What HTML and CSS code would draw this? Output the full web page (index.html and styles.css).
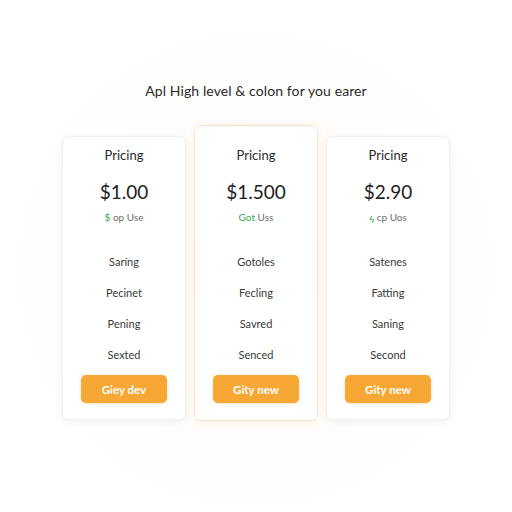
FILE: index.html
```html
<!DOCTYPE html>
<html>
<head>
<meta charset="utf-8">
<link rel="stylesheet" href="styles.css">
</head>
<body>
<div class="page">
  <h1 class="title">Apl High level &amp; colon for you earer</h1>
  <div class="cards">
    <div class="card">
      <div class="name">Pricing</div>
      <div class="price">$1.00</div>
      <div class="sub"><span class="green">$</span> op Use</div>
      <ul class="features">
        <li>Saríng</li>
        <li>Pecinet</li>
        <li>Pening</li>
        <li>Sexted</li>
      </ul>
      <button class="btn">Giey dev</button>
    </div>
    <div class="card featured">
      <div class="name">Pricing</div>
      <div class="price">$1.500</div>
      <div class="sub"><span class="green">Got</span> Uss</div>
      <ul class="features">
        <li>Gotoles</li>
        <li>Fecling</li>
        <li>Savred</li>
        <li>Senced</li>
      </ul>
      <button class="btn">Gity new</button>
    </div>
    <div class="card">
      <div class="name">Pricing</div>
      <div class="price">$2.90</div>
      <div class="sub"><span class="green">ϟ</span> cp Uos</div>
      <ul class="features">
        <li>Satenes</li>
        <li>Fatting</li>
        <li>Saning</li>
        <li>Second</li>
      </ul>
      <button class="btn">Gity new</button>
    </div>
  </div>
</div>
</body>
</html>
```

FILE: styles.css
```css
* { box-sizing: border-box; }
html, body {
  margin: 0;
  padding: 0;
  width: 512px;
  height: 512px;
  background: radial-gradient(circle at 256px 270px, #fffaf6 0, #ffffff 260px);
  font-family: Lato, "Open Sans", sans-serif;
  color: #2b2b2b;
}
.page {
  display: flex;
  flex-direction: column;
  align-items: center;
  padding-top: 82px;
}
.title {
  margin: 0;
  font-size: 14px;
  font-weight: 400;
  line-height: 18px;
  color: #2a2a2a;
  letter-spacing: 0.1px;
}
.cards {
  display: flex;
  align-items: flex-start;
  gap: 8px;
  margin-top: 25px;
}
.card {
  width: 124px;
  background: #fff;
  border: 1px solid #f1f1f1;
  border-radius: 7px;
  box-shadow: 0 2px 8px rgba(0,0,0,0.06);
  display: flex;
  flex-direction: column;
  align-items: center;
  padding: 10px 0 16px;
  margin-top: 11px;
  text-align: center;
}
.card.featured {
  border: 1.5px solid #fbe1cc;
  box-shadow: 0 2px 10px rgba(245,160,90,0.14);
  padding-top: 21px;
  padding-bottom: 17px;
  margin-top: 0;
}
.name {
  font-size: 13px;
  line-height: 16px;
  color: #2a2a2a;
}
.price {
  margin-top: 17px;
  font-size: 19px;
  line-height: 24px;
  color: #1e1e1e;
}
.sub {
  margin-top: 7px;
  font-size: 10px;
  line-height: 13px;
  color: #6c6c6c;
}
.green { color: #35a845; }
.features {
  list-style: none;
  margin: 22px 0 0;
  padding: 0;
}
.features li {
  height: 31px;
  line-height: 31px;
  font-size: 11px;
  color: #3a3a3a;
}
.btn {
  margin-top: 5px;
  width: 86px;
  height: 28px;
  border: none;
  border-radius: 5px;
  background: #f7a733;
  color: #fff;
  font-family: Lato, "Open Sans", sans-serif;
  font-weight: 700;
  font-size: 11.5px;
  box-shadow: 0 1px 3px rgba(240,150,40,0.25);
}
```
